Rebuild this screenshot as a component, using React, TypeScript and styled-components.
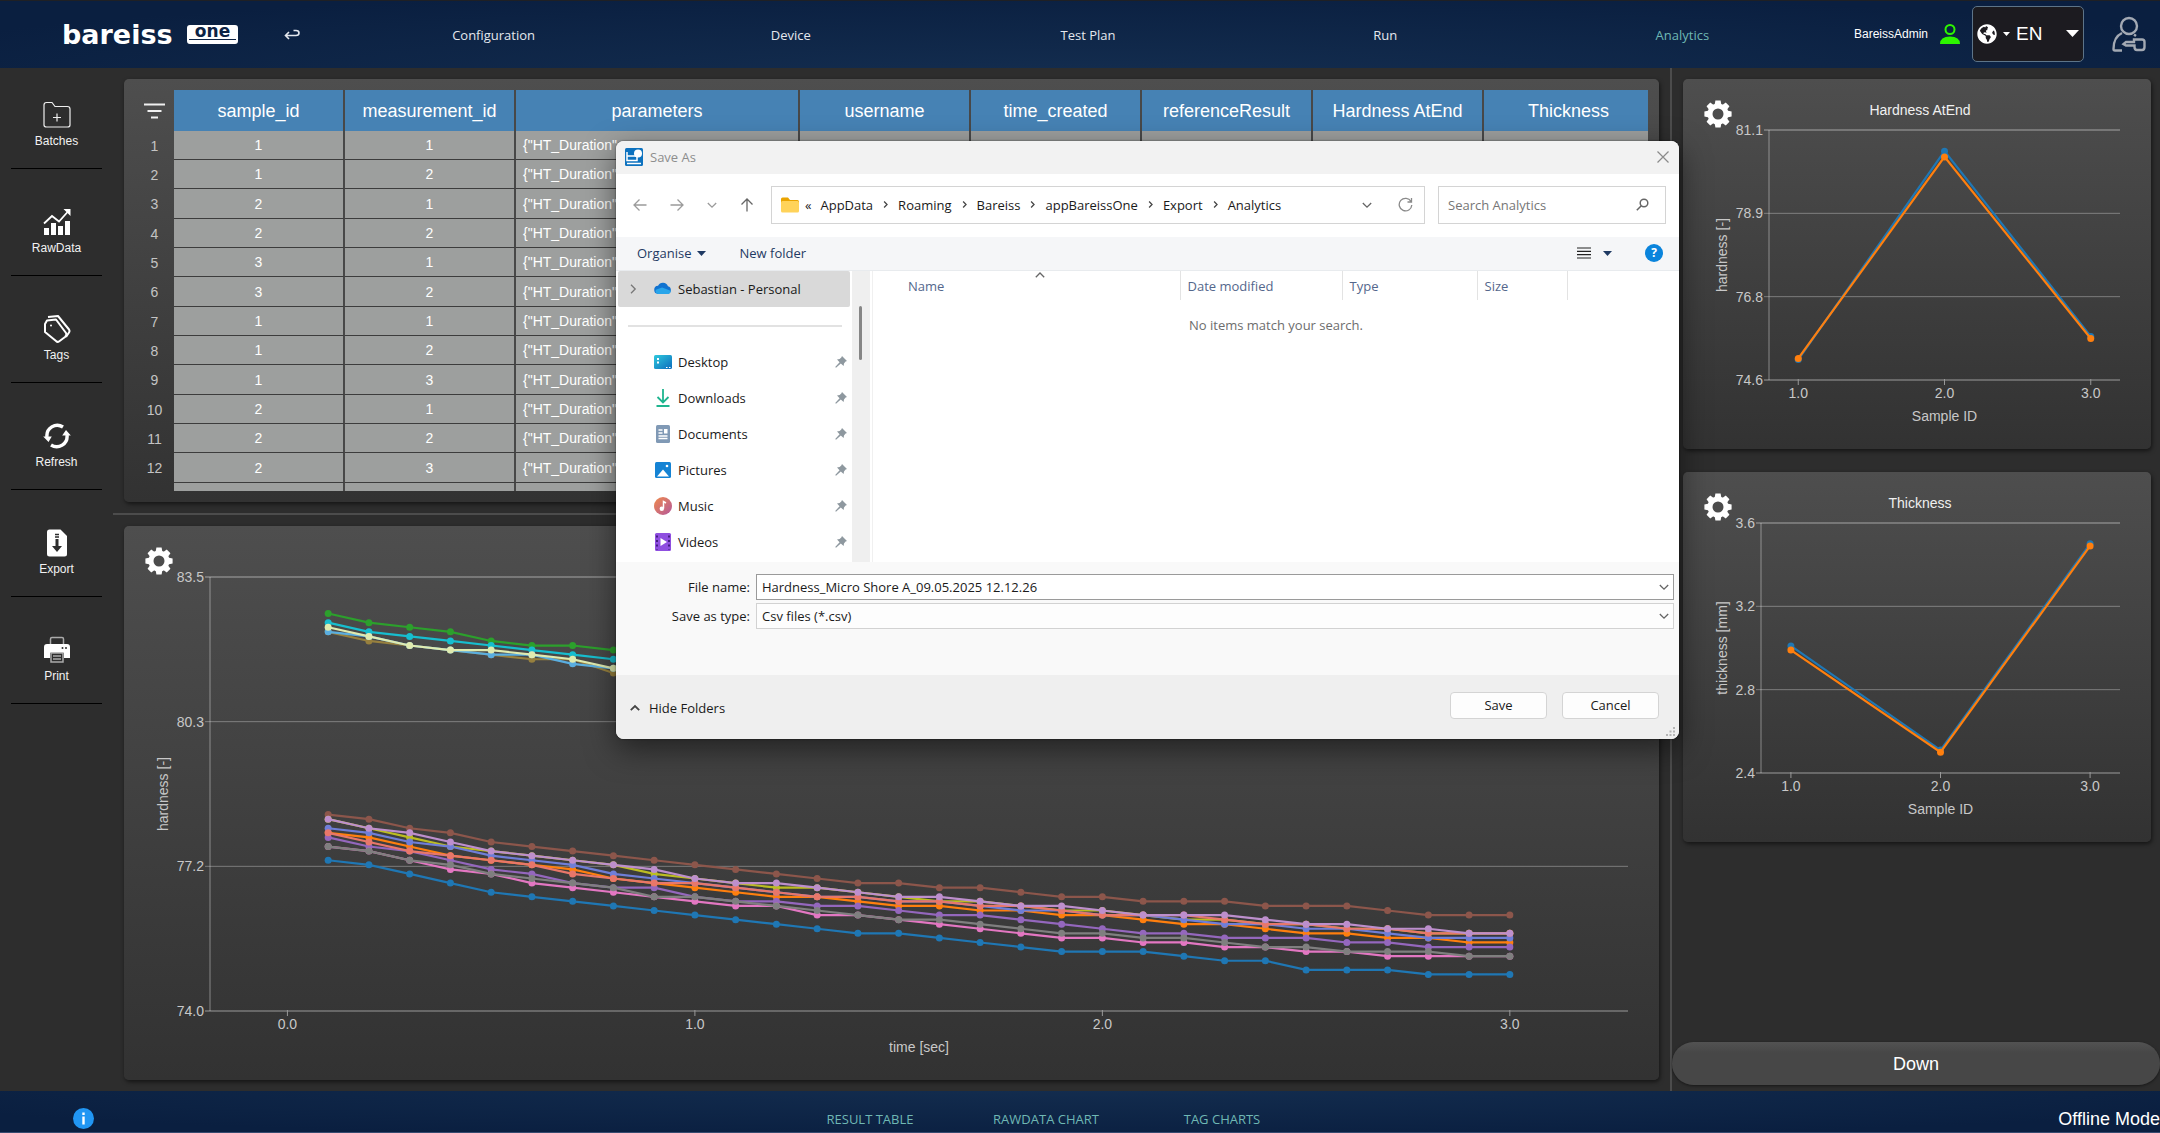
import React, { useLayoutEffect, useRef, useState } from "react";
import styled, { createGlobalStyle } from "styled-components";
import { FaGlobeAmericas } from "react-icons/fa";

const arial = `"Liberation Sans", Arial, sans-serif`;
const segoe = `"Open Sans", "Segoe UI", sans-serif`;

const GlobalStyle = createGlobalStyle`
  * { box-sizing: border-box; }
  html, body { margin: 0; padding: 0; background: #2d2d2d; }
  body { font-family: ${arial}; color: #fff; overflow: hidden; }
  button, input, select { font: inherit; color: inherit; margin: 0; }
  button { background: none; border: 0; padding: 0; cursor: pointer; }
  svg { display: block; flex: none; }
`;

const Page = styled.div`
  position: relative;
  display: grid;
  grid-template-rows: 68px minmax(0, 1fr) 42px;
  height: 100vh;
  overflow: hidden;
  background: #2d2d2d;
`;

/* ---------- Header ---------- */

const Header = styled.header`
  display: grid;
  grid-template-columns: 345px 1fr 329px;
  align-items: center;
  border-top: 1px solid #1f2024;
  background: radial-gradient(ellipse 60% 140% at 50% 120%, #142e50, #0a1f40);
`;

const Brand = styled.div`
  display: flex;
  align-items: center;
  padding-left: 62px;
`;

const Wordmark = styled.span`
  width: 125px;
  font: bold 27px/28px "DejaVu Sans", sans-serif;
`;

const WordmarkBadge = styled.span`
  width: 51px;
  height: 19px;
  border: 2px solid #fff;
  border-radius: 3px;
  background: #fff;
  color: #0d2344;
  text-align: center;
  font: bold 17px/8px "DejaVu Sans", sans-serif;

  &::after {
    content: "";
    display: block;
    height: 1px;
    margin-top: 4px;
    background: #0d2344;
  }
`;

const BackButton = styled.button`
  margin-left: 46px;
`;

const MainNav = styled.nav`
  display: grid;
  grid-template-columns: repeat(5, 1fr);
`;

const NavLink = styled.a<{ $active?: boolean }>`
  color: ${(p) => (p.$active ? "#6fb8b4" : "#e4e8ee")};
  text-align: center;
  text-decoration: none;
  font: 13px/20px ${segoe};
`;

const Account = styled.div`
  display: flex;
  align-items: center;
  justify-content: flex-end;
  gap: 12px;
  padding: 0 14px 2px 0;
  font-size: 12px;
`;

const LanguageBox = styled.label`
  display: flex;
  align-items: center;
  gap: 6px;
  width: 112px;
  height: 56px;
  margin-right: 16px;
  padding: 0 4px;
  border: 1px solid #5d7488;
  border-radius: 5px;
  background: #1c1b20;
`;

const LanguageSelect = styled.select`
  flex: 1;
  min-width: 0;
  border: 0;
  appearance: none;
  background: none;
  font: 19px/24px ${arial};
`;

/* ---------- Body ---------- */

const Body = styled.div`
  display: grid;
  grid-template-columns: 113px minmax(0, 1fr) 488px;
  min-height: 0;
`;

const Sidebar = styled.nav`
  display: flex;
  flex-direction: column;
  gap: 6px;
  padding: 0 11px;
`;

const SideButton = styled.button`
  display: flex;
  flex-direction: column;
  align-items: center;
  justify-content: flex-end;
  gap: 4px;
  height: 101px;
  padding-bottom: 19px;
  border-bottom: 1px solid #000;
  color: #f2f2f2;
  font: 12px/16px ${arial};
`;

const Center = styled.main`
  display: flex;
  flex-direction: column;
  gap: 11px;
  min-width: 0;
  padding: 11px 0;
  border-right: 2px solid #4c4c4c;
`;

const Card = styled.section<{ $height?: number }>`
  position: relative;
  ${(p) => (p.$height ? `flex: none; height: ${p.$height}px;` : "flex: 1; min-height: 0;")}
  border-radius: 5px;
  background: linear-gradient(#4e4e4e, #323232);
  box-shadow: 1px 2px 4px rgba(0, 0, 0, 0.55);
`;

const CenterCard = styled(Card)`
  margin: 0 11px;
`;

const TableCard = styled(CenterCard)`
  padding: 11px;
`;

const TableClip = styled.div`
  height: 100%;
  overflow: hidden;
`;

const Splitter = styled.hr`
  width: 100%;
  height: 2px;
  margin: 0;
  border: 0;
  background: #4c4c4c;
`;

const ResultTable = styled.table`
  width: calc(100% + 7px);
  table-layout: fixed;
  border-collapse: separate;
  border-spacing: 0;
  font: 14px/18px ${arial};

  th, td {
    padding: 0;
    text-align: center;
    white-space: nowrap;
    overflow: hidden;
    font-weight: normal;
  }
  thead th { height: 41px; font-size: 18px; }
  thead th + th { background: #4682b4; border-right: 2px solid #484848; }
  tbody th { color: #c4c4c4; }
  tbody td {
    height: 29px;
    background: #9d9f9e;
    border-right: 2px solid #484848;
    border-bottom: 1px solid #3c3c3c;
  }
  tbody tr:nth-child(3n) td { height: 30px; }
  td:nth-child(4) { padding-left: 7px; text-align: left; }
`;

const Col = styled.col<{ $w?: number }>`
  ${(p) => (p.$w ? `width: ${p.$w}px;` : "")}
`;

const FilterButton = styled.button`
  display: block;
  margin: 0 auto;
`;

const GearButton = styled.button`
  position: absolute;
  left: 21px;
  top: 21px;
`;

const ChartSurface = styled.div`
  position: absolute;
  inset: 0;
`;

const Plot = styled.svg`
  width: 100%;
  height: 100%;
  font: 14px ${arial};
`;

const Aside = styled.aside`
  display: flex;
  flex-direction: column;
  min-height: 0;
  padding: 11px 0 6px;
`;

const TagCharts = styled.div`
  display: flex;
  flex: 1;
  flex-direction: column;
  gap: 23px;
  min-height: 0;
  padding: 0 9px 0 11px;
`;

const DownButton = styled.button`
  height: 43px;
  border-radius: 22px;
  background: linear-gradient(#525252, #474747 25%);
  box-shadow: 0 1px 3px rgba(0, 0, 0, 0.5);
  font: 18px/24px ${arial};
`;

/* ---------- Footer ---------- */

const Footer = styled.footer`
  display: grid;
  grid-template-columns: 782fr 528px 850fr;
  align-items: start;
  padding-top: 17px;
  border-bottom: 1px solid #364b70;
  background: radial-gradient(ellipse 60% 140% at 50% -20%, #142e50, #0a1f40);
`;

const InfoButton = styled.button`
  width: 21px;
  margin-left: 73px;
`;

const FooterTabs = styled.nav`
  display: grid;
  grid-template-columns: repeat(3, 1fr);
`;

const FooterTab = styled.a`
  color: #6fb8b4;
  text-align: center;
  text-decoration: none;
  font: 13px/22px ${segoe};
`;

const Status = styled.span`
  justify-self: end;
  white-space: nowrap;
  font: 18px/22px ${arial};
`;

/* ---------- Save dialog ---------- */

const Dialog = styled.div`
  position: absolute;
  left: 616px;
  top: 141px;
  width: 1063px;
  overflow: hidden;
  border-radius: 8px;
  background: #fff;
  color: #1a1a1a;
  box-shadow: 0 0 2px rgba(0, 0, 0, 0.6), 0 10px 30px rgba(0, 0, 0, 0.5);
  font: 13px/18px ${segoe};
`;

const TitleBar = styled.div`
  display: flex;
  align-items: center;
  gap: 7px;
  height: 33px;
  padding: 0 10px 2px 9px;
  background: #f2f2f2;
  color: #8d8d8d;
`;

const CloseButton = styled.button`
  margin-left: auto;
`;

const PathRow = styled.div`
  display: flex;
  align-items: center;
  height: 63px;
  padding: 0 13px 1px 0;
`;

const Arrows = styled.div`
  display: flex;
  align-items: center;
  width: 155px;
  gap: 23px;
  padding-left: 17px;
`;

const Field = styled.div`
  display: flex;
  align-items: center;
  height: 38px;
  border: 1px solid #d4d4d4;
`;

const AddressBar = styled(Field)`
  flex: 1;
  gap: 6px;
  padding: 0 11px 1px 9px;
`;

const Crumbs = styled.div`
  display: flex;
  flex: 1;
  align-items: center;
  gap: 9px;
`;

const SearchField = styled(Field)`
  width: 228px;
  margin-left: 13px;
  padding: 0 16px 1px 9px;

  input {
    flex: 1;
    min-width: 0;
    padding: 0;
    border: 0;
    background: none;
  }
  input::placeholder { color: #767676; opacity: 1; }
`;

const Toolbar = styled.div`
  display: flex;
  align-items: center;
  height: 34px;
  padding: 0 16px 1px 21px;
  border-bottom: 1px solid #e8ebee;
  background: #f5f6f8;
  color: #1f3a63;
`;

const ToolButton = styled.button<{ $ml?: number }>`
  display: flex;
  align-items: center;
  gap: 6px;
  margin-left: ${(p) => (p.$ml ? `${p.$ml}px` : "0")};
`;

const ViewTools = styled.div`
  display: flex;
  align-items: center;
  gap: 12px;
  margin-left: auto;
`;

const Explorer = styled.div`
  display: grid;
  grid-template-columns: 236px 18px 1fr;
  height: 291px;
`;

const Places = styled.div`
  padding-left: 2px;
`;

const Place = styled.button<{ $selected?: boolean }>`
  display: grid;
  grid-template-columns: 20px 18px 1fr 12px;
  align-items: center;
  column-gap: 6px;
  width: 232px;
  height: 36px;
  padding: 0 3px 1px 10px;
  border-radius: 2px;
  background: ${(p) => (p.$selected ? "#d9d9d9" : "none")};
  text-align: left;
  white-space: nowrap;
`;

const PlacesRule = styled.hr`
  width: 214px;
  height: 2px;
  margin: 18px 0 17px 10px;
  border: 0;
  background: #e2e2e2;
`;

const ScrollTrack = styled.div`
  padding: 35px 8px 0 7px;
  background: #efefef;
`;

const ScrollThumb = styled.div`
  height: 54px;
  border-radius: 2px;
  background: #868686;
`;

const FileArea = styled.div`
  margin-left: 2px;
  border-left: 1px solid #f0f0f0;
`;

const FileTable = styled.table`
  width: 100%;
  table-layout: fixed;
  border-collapse: collapse;

  th {
    height: 29px;
    padding: 0 0 0 7px;
    border-right: 1px solid #e3e3e3;
    color: #54678c;
    font-weight: normal;
    text-align: left;
  }
  th:first-child { padding-left: 35px; }
  th:last-child { border-right: 0; }
  td {
    height: 50px;
    padding: 0;
    color: #6d6d6d;
    text-align: center;
  }
`;

const SortMark = styled.span`
  position: absolute;
  left: 419px;
  top: 129px;
`;

const Form = styled.div`
  display: grid;
  grid-template-columns: 134px 1fr;
  grid-auto-rows: 26px;
  gap: 3px 6px;
  height: 113px;
  padding: 12px 5px 0 0;
  background: #f9f9f9;
`;

const FormLabel = styled.label`
  align-self: center;
  text-align: right;
`;

const Combo = styled.div<{ $strong?: boolean }>`
  display: flex;
  align-items: center;
  padding-right: 4px;
  border: 1px solid ${(p) => (p.$strong ? "#9a9a9a" : "#d2d2d2")};
  background: ${(p) => (p.$strong ? "#fff" : "#fdfdfd")};

  input, select {
    flex: 1;
    min-width: 0;
    height: 22px;
    padding: 0 5px;
    border: 0;
    appearance: none;
    background: none;
  }
`;

const DialogFooter = styled.div`
  display: flex;
  align-items: center;
  gap: 15px;
  height: 64px;
  padding: 0 20px 4px 14px;
  background: #efefef;
`;

const HideFolders = styled.button`
  display: flex;
  align-items: center;
  gap: 9px;
  margin-right: auto;
  padding-top: 6px;
`;

const ActionButton = styled.button`
  width: 97px;
  height: 27px;
  border: 1px solid #d4d4d4;
  border-radius: 4px;
  background: #fdfdfd;
`;

const ResizeGrip = styled.span`
  position: absolute;
  right: 4px;
  bottom: 3px;
`;

/* ---------- Icons ---------- */

const Gear = () => (
  <svg width="28" height="28" viewBox="-14 -14 28 28" aria-hidden="true">
    <circle r="8" fill="none" stroke="#fff" strokeWidth="5" />
    {[0, 45, 90, 135, 180, 225, 270, 315].map((a) => (
      <path key={a} d="M-3.4 -9 L-2.6 -13.6 H2.6 L3.4 -9Z" fill="#fff" transform={`rotate(${a})`} />
    ))}
  </svg>
);

const Chevron = ({ dir, color = "#666", size = 10, width = 1.3 }: { dir: "up" | "down" | "right"; color?: string; size?: number; width?: number }) => (
  <svg width={size} height={size} viewBox="0 0 10 10" fill="none" stroke={color} strokeWidth={width} aria-hidden="true">
    <path d={dir === "up" ? "M.8 7.2 5 3l4.200 4.200" : dir === "down" ? "M.8 3 5 7.200 9.200 3" : "M3 .8 7.200 5 3 9.200"} />
  </svg>
);

const Caret = ({ w, h, color }: { w: number; h: number; color: string }) => (
  <svg width={w} height={h} viewBox="0 0 10 6" preserveAspectRatio="none" aria-hidden="true">
    <path d="M0 0H10L5 6Z" fill={color} />
  </svg>
);

const ArrowIcon = ({ rotate = 0, color = "#9b9b9b" }: { rotate?: number; color?: string }) => (
  <svg width="14" height="14" viewBox="0 0 14 14" fill="none" stroke={color} strokeWidth="1.300" aria-hidden="true">
    <g transform={`rotate(${rotate} 7 7)`}>
      <path d="M13.500 7H1M6.500 1.500 1 7l5.500 5.500" />
    </g>
  </svg>
);

const Pin = () => (
  <svg width="12" height="12" viewBox="0 0 12 12" aria-hidden="true">
    <path d="M7 0 12 5 10.600 5.600 9 7.500 8.600 10 5.800 7.400 1 11.800.2 11 4.600 6.200 2 3.600 4.600 3 6.300 1.500Z" fill="#8e989f" />
  </svg>
);

const sideIcons: Record<string, React.ReactNode> = {
  Batches: (
    <svg width="28" height="28" viewBox="0 0 28 28" fill="none" stroke="#eee" strokeWidth="1.200">
      <path d="M1 4Q1 1.500 3.500 1.500H9L12 5.500H24.500Q27 5.500 27 8V24Q27 26 24.500 26H3.500Q1 26 1 24Z" />
      <path d="M14 12.500v8M10 16.500h8" />
    </svg>
  ),
  RawData: (
    <svg width="28" height="28" viewBox="0 0 28 28">
      <g fill="#fff">
        <path d="M1 20h5v7H1zM8 15h5v12H8zM15 18h5v9h-5zM22 13h5v14h-5zM20.500 1H27.500V8Z" />
      </g>
      <path d="M1 15.500 9 8 16 13.500 25 3.500" fill="none" stroke="#fff" strokeWidth="1.800" />
    </svg>
  ),
  Tags: (
    <svg width="28" height="28" viewBox="0 0 28 28" fill="none" stroke="#fff" strokeWidth="2" strokeLinejoin="round">
      <path d="M2 9 4 5.500 13 4.500 23 18Q24 20 22 22L16 26.500Q14.500 27.500 13 26L2 17Z" />
      <path d="M5 2 15 1 26 14.500Q27 16 26 17.500L23 22" />
      <circle cx="8" cy="10.500" r="1" fill="#fff" stroke="none" />
    </svg>
  ),
  Refresh: (
    <svg width="28" height="28" viewBox="0 0 28 28" fill="none" stroke="#fff" strokeWidth="3.400">
      <path d="M20 5A10.400 10.400 0 0 0 4 15" />
      <path d="M8 23A10.400 10.400 0 0 0 24 13" />
      <path d="M.2 14.500h8.600L5.500 20ZM19.200 13.500h8.600L23 8Z" fill="#fff" stroke="none" />
    </svg>
  ),
  Export: (
    <svg width="28" height="28" viewBox="0 0 28 28">
      <path d="M4 3Q4 .5 6.500.5H17.500L24 7V25Q24 27.500 21.500 27.500H6.500Q4 27.500 4 25Z" fill="#fff" />
      <path d="M12 5.500h4M12 8h4" stroke="#2d2d2d" strokeWidth="1.300" />
      <path d="M12.500 10h3v7h3.500L14 23 9 17h3.500Z" fill="#2d2d2d" />
    </svg>
  ),
  Print: (
    <svg width="28" height="28" viewBox="0 0 28 28">
      <path d="M7.500 9V3Q7.500 1.500 9 1.500H19Q20.500 1.500 20.500 3V9" fill="none" stroke="#aaa" strokeWidth="1.500" />
      <path d="M1 11Q1 8 4 8H24Q27 8 27 11V22H21V17H7V22H1Z" fill="#fff" />
      <circle cx="19.500" cy="12" r="1" fill="#2d2d2d" />
      <circle cx="23" cy="12" r="1" fill="#2d2d2d" />
      <path d="M8 17H20V26H8ZM10 20H18M10 23H18" fill="none" stroke="#aaa" strokeWidth="1.500" />
    </svg>
  ),
};

const placeIcons: Record<string, React.ReactNode> = {
  Desktop: (
    <svg width="18" height="18" viewBox="0 0 18 18">
      <defs>
        <linearGradient id="desk" x2="1" y2="1"><stop stopColor="#2fc9dd" /><stop offset="1" stopColor="#0b6cbd" /></linearGradient>
      </defs>
      <rect y="2" width="18" height="14" rx="1.500" fill="url(#desk)" />
      <path d="M3 5h2v2H3zM3 8.500h2v2H3zM12 14h1.500v1H12zM15 14h1.500v1H15z" fill="#fff" />
    </svg>
  ),
  Downloads: (
    <svg width="18" height="18" viewBox="0 0 18 18" fill="none" stroke="#1fb58f" strokeWidth="1.800">
      <path d="M9 0v13M3.500 8 9 13.500 14.500 8M2.500 17h13" />
    </svg>
  ),
  Documents: (
    <svg width="18" height="18" viewBox="0 0 18 18">
      <rect x="2" width="14" height="18" rx="1.500" fill="#8099b5" />
      <path d="M4.500 5h4M4.500 8h4M4.500 11h9M4.500 13.500h9" stroke="#fff" strokeWidth="1.300" />
      <rect x="10" y="4" width="3.500" height="4.500" fill="#fff" />
    </svg>
  ),
  Pictures: (
    <svg width="18" height="18" viewBox="0 0 18 18">
      <rect x="1" y="1" width="16" height="16" rx="1.500" fill="#1583d4" />
      <path d="M3 15.500 9 8.500 15 15.500Z" fill="#fff" />
      <circle cx="13" cy="5" r="1.300" fill="#fff" />
    </svg>
  ),
  Music: (
    <svg width="18" height="18" viewBox="0 0 18 18">
      <defs>
        <linearGradient id="mus" x2="1" y2="1"><stop stopColor="#f08a4b" /><stop offset="1" stopColor="#b4589c" /></linearGradient>
      </defs>
      <circle cx="9" cy="9" r="9" fill="url(#mus)" />
      <path d="M9.500 11.500V4.500L12 6" fill="none" stroke="#fff" strokeWidth="1.500" />
      <circle cx="7.800" cy="11.800" r="2.200" fill="#fff" />
    </svg>
  ),
  Videos: (
    <svg width="18" height="18" viewBox="0 0 18 18">
      <rect x="1" width="16" height="18" rx="1.500" fill="#8f4fe0" />
      <path d="M3 2.500v14M15 2.500v14" stroke="#3d1a78" strokeWidth="1.800" strokeDasharray="2 2.500" />
      <path d="M6.500 5 13 9 6.500 13Z" fill="#fff" />
    </svg>
  ),
};

const Cloud = () => (
  <svg width="18" height="13" viewBox="0 0 20 14" aria-hidden="true">
    <path d="M5 13A4.500 4.500 0 0 1 4.500 4 6 6 0 0 1 15.500 4.500 4.400 4.400 0 0 1 15.500 13Z" fill="#1173d0" />
    <path d="M4 13A3.500 3.500 0 0 1 2 8.500L9 6 18.500 9.500Q18.500 13 15.500 13Z" fill="#29a5ea" />
  </svg>
);

/* ---------- Charts ---------- */

type Series = { color: string; points: [number, number][] };

type ChartProps = {
  title?: string;
  xLabel: string;
  yLabel: string;
  xDomain: [number, number];
  yDomain: [number, number];
  xTicks: number[];
  yTicks: string[];
  left: number;
  series: Series[];
};

const TOP = 51;
const RIGHT = 31;
const BOTTOM = 69;

function Chart({ title, xLabel, yLabel, xDomain, yDomain, xTicks, yTicks, left, series }: ChartProps) {
  const ref = useRef<HTMLDivElement>(null);
  const [size, setSize] = useState({ w: 0, h: 0 });

  useLayoutEffect(() => {
    const el = ref.current!;
    const measure = () => setSize({ w: el.clientWidth, h: el.clientHeight });
    measure();
    const observer = new ResizeObserver(measure);
    observer.observe(el);
    return () => observer.disconnect();
  }, []);

  const { w, h } = size;
  const x0 = left;
  const x1 = w - RIGHT;
  const y0 = h - BOTTOM;
  const px = (v: number) => x0 + ((v - xDomain[0]) / (xDomain[1] - xDomain[0])) * (x1 - x0);
  const py = (v: number) => y0 - ((v - yDomain[0]) / (yDomain[1] - yDomain[0])) * (y0 - TOP);

  return (
    <ChartSurface ref={ref}>
      {w > 0 && (
        <Plot>
          {title && (
            <text x={w / 2 + 3} y="36" textAnchor="middle" fill="#f0f0f0">{title}</text>
          )}
          {yTicks.map((label, i) => {
            const last = yTicks.length - 1;
            const y = TOP + (i / last) * (y0 - TOP);
            const edge = i === 0 || i === last;
            return (
              <g key={label}>
                <line x1={x0 - 5} x2={x1} y1={y} y2={y} stroke="#fff" strokeOpacity={edge ? 0.25 : 0.32} strokeWidth={edge ? 2 : 1} />
                <text x={x0 - 6} y={y + 5} textAnchor="end" fill="#c8c8c8">{label}</text>
              </g>
            );
          })}
          <line x1={x0} x2={x0} y1={TOP} y2={y0} stroke="#fff" strokeOpacity="0.2" strokeWidth="2" />
          {xTicks.map((t) => (
            <g key={t}>
              <line x1={px(t)} x2={px(t)} y1={y0 - 1} y2={y0 + 5} stroke="#999" />
              <text x={px(t)} y={y0 + 18} textAnchor="middle" fill="#c8c8c8">{t.toFixed(1)}</text>
            </g>
          ))}
          <text x={(x0 + x1) / 2} y={h - 28} textAnchor="middle" fill="#c8c8c8">{xLabel}</text>
          <text transform={`translate(44 ${(TOP + y0) / 2}) rotate(-90)`} textAnchor="middle" fill="#c8c8c8">{yLabel}</text>
          {series.map((s) => (
            <g key={s.color} fill={s.color}>
              <polyline points={s.points.map(([a, b]) => `${px(a)},${py(b)}`).join(" ")} fill="none" stroke={s.color} strokeWidth="2.200" />
              {s.points.map(([a, b]) => (
                <circle key={a} cx={px(a)} cy={py(b)} r="3.500" />
              ))}
            </g>
          ))}
        </Plot>
      )}
    </ChartSurface>
  );
}

/* Tenths above 74.0, one reading every 0.1 s. */
const raw = (color: string, tenths: number[]): Series => ({
  color,
  points: tenths.map((t, i) => [(i + 1) / 10, 74 + t / 10]),
});

const rawSeries: Series[] = [
  raw("#1f77b4", [33, 32, 30, 28, 26, 25, 24, 23, 22, 21, 20, 19, 18, 17, 17, 16, 15, 14, 13, 13, 13, 12, 11, 11, 9, 9, 9, 8, 8, 8]),
  raw("#ff7f0e", [39, 38, 36, 34, 33, 32, 31, 29, 28, 27, 26, 25, 25, 24, 23, 23, 22, 22, 21, 21, 20, 19, 19, 18, 17, 17, 16, 16, 15, 15]),
  raw("#2ca02c", [87, 85, 84, 83, 81, 80, 80, 79]),
  raw("#9467bd", [38, 36, 35, 33, 31, 30, 28, 27, 27, 25, 24, 24, 23, 23, 22, 21, 21, 20, 19, 18, 17, 17, 16, 16, 16, 15, 15, 14, 14, 14]),
  raw("#8c564b", [43, 42, 40, 39, 37, 36, 35, 34, 33, 32, 31, 30, 29, 28, 28, 27, 27, 26, 25, 25, 24, 24, 24, 23, 23, 23, 22, 21, 21, 21]),
  raw("#e377c2", [36, 35, 33, 31, 30, 28, 27, 26, 25, 24, 23, 23, 21, 21, 20, 19, 18, 17, 16, 16, 15, 15, 14, 14, 13, 13, 12, 12, 12, 12]),
  raw("#7f7f7f", [36, 35, 33, 32, 30, 29, 28, 27, 25, 25, 24, 23, 22, 21, 20, 20, 19, 18, 17, 17, 16, 16, 15, 14, 14, 13, 13, 13, 12, 12]),
  raw("#bcbd22", [42, 40, 38, 36, 35, 34, 33, 32, 30, 29, 28, 27, 27, 26, 25, 24, 24, 23, 22, 22, 21, 20, 20, 19, 19, 18, 18, 17, 17, 17]),
  raw("#17becf", [85, 83, 82, 81, 80, 79, 78, 77]),
  raw("#97803e", [83, 81, 80, 79, 78, 77, 77, 74]),
  raw("#5aaee0", [83, 82, 80, 79, 78, 78, 76, 75]),
  raw("#e0ebb0", [84, 82, 80, 79, 79, 78, 77, 75]),
  raw("#6f7ed8", [40, 39, 37, 36, 34, 33, 32, 30, 29, 28, 27, 26, 25, 25, 24, 24, 23, 22, 22, 21, 21, 20, 19, 19, 18, 18, 17, 16, 16, 16]),
  raw("#e8776a", [39, 37, 35, 34, 33, 32, 30, 29, 28, 28, 27, 26, 25, 25, 24, 24, 23, 23, 22, 21, 21, 21, 20, 19, 19, 18, 18, 17, 17, 17]),
  raw("#bd8fcd", [42, 40, 39, 37, 35, 34, 33, 32, 31, 29, 28, 28, 27, 26, 25, 25, 24, 23, 23, 22, 21, 21, 21, 20, 19, 19, 18, 18, 17, 17]),
];

const pair = (blue: number[], orange: number[]): Series[] => [
  { color: "#1f77b4", points: blue.map((v, i) => [i + 1, v]) },
  { color: "#ff7f0e", points: orange.map((v, i) => [i + 1, v]) },
];

const hardnessSeries = pair([75.13, 80.55, 75.73], [75.16, 80.4, 75.68]);
const thicknessSeries = pair([3.01, 2.51, 3.5], [2.99, 2.5, 3.49]);

/* ---------- Data ---------- */

const columns = ["sample_id", "measurement_id", "parameters", "username", "time_created", "referenceResult", "Hardness AtEnd", "Thickness"];
const rows = [[1, 1], [1, 2], [2, 1], [2, 2], [3, 1], [3, 2], [1, 1], [1, 2], [1, 3], [2, 1], [2, 2], [2, 3]];
const crumbs = ["AppData", "Roaming", "Bareiss", "appBareissOne", "Export", "Analytics"];

function SaveDialog() {
  return (
    <Dialog role="dialog" aria-label="Save As">
      <TitleBar>
        <svg width="18" height="18" viewBox="0 0 18 18" aria-hidden="true">
          <rect width="18" height="18" rx="1.500" fill="#0d72bf" />
          <path d="M2 4v8.500h10V8H2.500M2 15.500h14" fill="none" stroke="#fff" strokeWidth="1.500" />
          <circle cx="13" cy="5.500" r="4" fill="#fff" />
        </svg>
        Save As
        <CloseButton aria-label="Close">
          <svg width="12" height="12" viewBox="0 0 12 12" stroke="#8a8a8a" strokeWidth="1.200"><path d="M.5.5l11 11M11.500.5l-11 11" /></svg>
        </CloseButton>
      </TitleBar>

      <PathRow>
        <Arrows>
          <button aria-label="Back"><ArrowIcon /></button>
          <button aria-label="Forward"><ArrowIcon rotate={180} /></button>
          <button aria-label="Recent locations"><Chevron dir="down" color="#9b9b9b" /></button>
          <button aria-label="Up"><ArrowIcon rotate={90} color="#666" /></button>
        </Arrows>
        <AddressBar>
          <svg width="18" height="16" viewBox="0 0 18 16" aria-hidden="true">
            <path d="M0 2Q0 .5 1.500.5H7L9 3H16.500Q18 3 18 4.500V9H0Z" fill="#eaa400" />
            <rect y="4" width="18" height="11.500" rx="1.500" fill="#ffd35a" />
          </svg>
          <Crumbs>
            <span>«</span>
            {crumbs.map((c, i) => (
              <React.Fragment key={c}>
                {i > 0 && <Chevron dir="right" size={7} color="#444" width={1.8} />}
                <button>{c}</button>
              </React.Fragment>
            ))}
          </Crumbs>
          <button aria-label="Previous locations"><Chevron dir="down" /></button>
          <ToolButton aria-label="Refresh" $ml={20}>
            <svg width="15" height="15" viewBox="0 0 15 15" fill="none" stroke="#8a8a8a" strokeWidth="1.300">
              <path d="M13 4.500A6.300 6.300 0 1 0 13.800 8M13.500 1v4H9.500" />
            </svg>
          </ToolButton>
        </AddressBar>
        <SearchField>
          <input aria-label="Search Analytics" placeholder="Search Analytics" />
          <svg width="13" height="13" viewBox="0 0 13 13" fill="none" stroke="#666" strokeWidth="1.500" aria-hidden="true">
            <circle cx="8" cy="5" r="3.800" />
            <path d="M5.300 7.700.8 12.200" />
          </svg>
        </SearchField>
      </PathRow>

      <Toolbar>
        <ToolButton>Organise <Caret w={9} h={5} color="#1f3a63" /></ToolButton>
        <ToolButton $ml={33}>New folder</ToolButton>
        <ViewTools>
          <ToolButton aria-label="Change view">
            <svg width="14" height="12" viewBox="0 0 14 12" stroke="#222" strokeWidth="1.200"><path d="M0 1h14M0 4.300h14M0 7.600h14M0 11h14" /></svg>
          </ToolButton>
          <ToolButton aria-label="More view options"><Caret w={9} h={5} color="#1f3a63" /></ToolButton>
          <ToolButton aria-label="Help" $ml={21}>
            <svg width="18" height="18" viewBox="0 0 18 18">
              <circle cx="9" cy="9" r="9" fill="#0a84dc" />
              <text x="9" y="13" textAnchor="middle" fontSize="12" fontWeight="700" fill="#fff">?</text>
            </svg>
          </ToolButton>
        </ViewTools>
      </Toolbar>

      <Explorer>
        <Places>
          <Place $selected><Chevron dir="right" color="#777" /><Cloud /><span>Sebastian - Personal</span></Place>
          <PlacesRule />
          {Object.keys(placeIcons).map((name) => (
            <Place key={name}>
              <span />
              {placeIcons[name]}
              <span>{name}</span>
              <Pin />
            </Place>
          ))}
        </Places>
        <ScrollTrack><ScrollThumb /></ScrollTrack>
        <FileArea>
          <FileTable>
            <colgroup>
              <Col $w={307} /><Col $w={162} /><Col $w={135} /><Col $w={90} /><Col />
            </colgroup>
            <thead>
              <tr><th>Name</th><th>Date modified</th><th>Type</th><th>Size</th><th aria-label="More" /></tr>
            </thead>
            <tbody>
              <tr><td colSpan={5}>No items match your search.</td></tr>
            </tbody>
          </FileTable>
        </FileArea>
      </Explorer>
      <SortMark><Chevron dir="up" /></SortMark>

      <Form>
        <FormLabel htmlFor="file-name">File name:</FormLabel>
        <Combo $strong>
          <input id="file-name" defaultValue="Hardness_Micro Shore A_09.05.2025 12.12.26" />
          <Chevron dir="down" />
        </Combo>
        <FormLabel htmlFor="file-type">Save as type:</FormLabel>
        <Combo>
          <select id="file-type"><option>Csv files (*.csv)</option></select>
          <Chevron dir="down" />
        </Combo>
      </Form>

      <DialogFooter>
        <HideFolders><Chevron dir="up" color="#444" width={1.8} />Hide Folders</HideFolders>
        <ActionButton>Save</ActionButton>
        <ActionButton>Cancel</ActionButton>
      </DialogFooter>
      <ResizeGrip>
        <svg width="9" height="9" viewBox="0 0 9 9" fill="#b5b5b5" aria-hidden="true">
          <path d="M7 0h2v2H7zM7 3.500h2v2H7zM3.500 3.500h2v2h-2zM7 7h2v2H7zM3.500 7h2v2h-2zM0 7h2v2H0z" />
        </svg>
      </ResizeGrip>
    </Dialog>
  );
}

export default function App() {
  return (
    <Page>
      <GlobalStyle />
      <Header>
        <Brand>
          <Wordmark>bareiss</Wordmark>
          <WordmarkBadge>one</WordmarkBadge>
          <BackButton aria-label="Back">
            <svg width="16" height="12" viewBox="0 0 16 12" fill="none" stroke="#e4e8ee" strokeWidth="1.600">
              <path d="M5 3 1.500 6.500 5 10M1.500 6.500H12Q15 6.500 15 4T12 1.500H9.500" />
            </svg>
          </BackButton>
        </Brand>
        <MainNav>
          {["Configuration", "Device", "Test Plan", "Run", "Analytics"].map((n) => (
            <NavLink key={n} href="#" $active={n === "Analytics"}>{n}</NavLink>
          ))}
        </MainNav>
        <Account>
          <span>BareissAdmin</span>
          <svg width="20" height="20" viewBox="0 0 20 20" aria-hidden="true">
            <circle cx="10" cy="5.500" r="4.500" fill="none" stroke="#2df500" strokeWidth="2" />
            <path d="M0 20Q0 12.500 10 12.500T20 20Z" fill="#2df500" />
          </svg>
          <LanguageBox>
            <FaGlobeAmericas size={20} />
            <Caret w={7} h={4} color="#fff" />
            <LanguageSelect aria-label="Language"><option>EN</option></LanguageSelect>
            <Caret w={13} h={7} color="#fff" />
          </LanguageBox>
          <button aria-label="Sign in">
            <svg width="34" height="36" viewBox="0 0 34 36" fill="none" stroke="#a3a9b3" strokeWidth="2.400">
              <circle cx="17" cy="10" r="8" />
              <path d="M10 17Q1.500 21 1.500 33Q1.500 34.500 3 34.500H10M22 18.500 24 20" />
              <path d="M22 25.500V23.500H30Q32.500 23.500 32.500 26V31Q32.500 34 30 34H25Q22.500 34 22.500 31V29.500H14L11.500 28 14 26H22Z" />
            </svg>
          </button>
        </Account>
      </Header>

      <Body>
        <Sidebar>
          {Object.keys(sideIcons).map((name) => (
            <SideButton key={name}>{sideIcons[name]}{name}</SideButton>
          ))}
        </Sidebar>

        <Center>
          <TableCard $height={423}>
            <TableClip>
              <ResultTable>
                <colgroup>
                  <Col $w={39} /><Col $w={171} /><Col $w={171} /><Col /><Col $w={171} /><Col $w={171} /><Col $w={171} /><Col $w={171} /><Col $w={171} />
                </colgroup>
                <thead>
                  <tr>
                    <th>
                      <FilterButton aria-label="Filter">
                        <svg width="21" height="16" viewBox="0 0 21 16" stroke="#f0f0f0" strokeWidth="2.200"><path d="M0 1.500h21M3.500 8h14M7 14.500h7" /></svg>
                      </FilterButton>
                    </th>
                    {columns.map((c) => <th key={c}>{c}</th>)}
                  </tr>
                </thead>
                <tbody>
                  {rows.map(([sample, measurement], i) => (
                    <tr key={i}>
                      <th>{i + 1}</th>
                      <td>{sample}</td>
                      <td>{measurement}</td>
                      <td>{'{"HT_Duration"'}</td>
                      <td /><td /><td /><td /><td />
                    </tr>
                  ))}
                  <tr><th /><td /><td /><td /><td /><td /><td /><td /><td /></tr>
                </tbody>
              </ResultTable>
            </TableClip>
          </TableCard>
          <Splitter />
          <CenterCard>
            <Chart
              xLabel="time [sec]" yLabel="hardness [-]" left={86}
              xDomain={[-0.19, 3.29]} yDomain={[74, 83.5]}
              xTicks={[0, 1, 2, 3]} yTicks={["83.5", "80.3", "77.2", "74.0"]}
              series={rawSeries}
            />
            <GearButton aria-label="Chart settings"><Gear /></GearButton>
          </CenterCard>
        </Center>

        <Aside>
          <TagCharts>
            <Card $height={370}>
              <Chart
                title="Hardness AtEnd" xLabel="Sample ID" yLabel="hardness [-]" left={86}
                xDomain={[0.8, 3.2]} yDomain={[74.6, 81.1]}
                xTicks={[1, 2, 3]} yTicks={["81.1", "78.9", "76.8", "74.6"]}
                series={hardnessSeries}
              />
              <GearButton aria-label="Chart settings"><Gear /></GearButton>
            </Card>
            <Card $height={370}>
              <Chart
                title="Thickness" xLabel="Sample ID" yLabel="thickness [mm]" left={78}
                xDomain={[0.8, 3.2]} yDomain={[2.4, 3.6]}
                xTicks={[1, 2, 3]} yTicks={["3.6", "3.2", "2.8", "2.4"]}
                series={thicknessSeries}
              />
              <GearButton aria-label="Chart settings"><Gear /></GearButton>
            </Card>
          </TagCharts>
          <DownButton>Down</DownButton>
        </Aside>
      </Body>

      <Footer>
        <InfoButton aria-label="Information">
          <svg width="21" height="21" viewBox="0 0 21 21">
            <circle cx="10.500" cy="10.500" r="10.500" fill="#2196f3" />
            <path d="M9.300 4.500h2.400v2.400H9.300zM9.300 8.500h2.400v8H9.300z" fill="#fff" />
          </svg>
        </InfoButton>
        <FooterTabs>
          {["RESULT TABLE", "RAWDATA CHART", "TAG CHARTS"].map((n) => (
            <FooterTab key={n} href="#">{n}</FooterTab>
          ))}
        </FooterTabs>
        <Status>Offline Mode</Status>
      </Footer>

      <SaveDialog />
    </Page>
  );
}
